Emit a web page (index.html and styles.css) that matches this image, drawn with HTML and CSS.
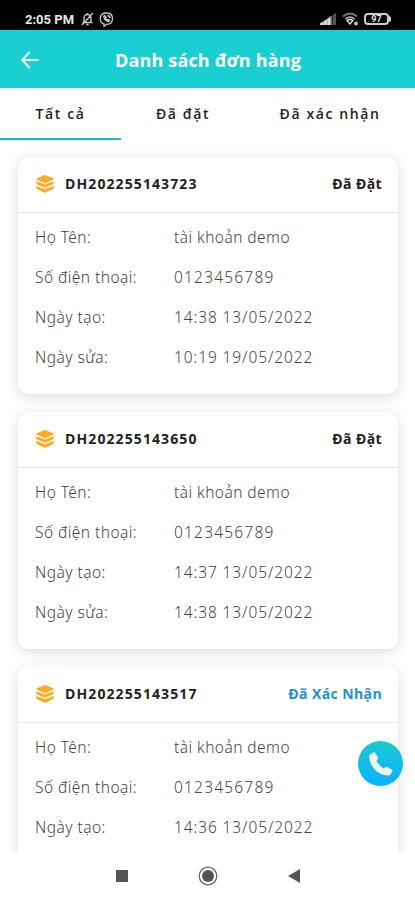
FILE: index.html
```html
<!DOCTYPE html>
<html lang="vi">
<head>
  <meta charset="UTF-8">
  <meta name="viewport" content="width=device-width, initial-scale=1.0">
  <title>Danh sách đơn hàng</title>
  <link rel="stylesheet" href="styles.css">
</head>
<body>
  <svg class="sprite">
    <symbol id="layers" viewBox="0 0 18 18">
      <path d="M9 0 L17.3 3.2 Q18 4 17.3 4.8 L9 8.200 L.7 4.800 Q0 4 .7 3.200Z"/>
      <path d="M.5 6.200 L9 9.500 L17.500 6.200 Q18.300 8 17.300 9.200 L9 12.800 L.7 9.200 Q-.3 8 .5 6.200Z"/>
      <path d="M.5 10.900 L9 14.200 L17.500 10.900 Q18.300 12.700 17.300 14 L9 18 L.7 14 Q-.3 12.700 .5 10.900Z"/>
    </symbol>
  </svg>

  <div class="app">
    <div class="status-bar">
      <span class="time">2:05 PM</span>
      <svg class="mute" width="13" height="14" viewBox="0 0 13 14" fill="none" stroke="#ccc" stroke-width="1.3">
        <path d="M1.5 10.5h10M3 10V6a3.5 3.5 0 0 1 7 0v4M6.5 1v1.5M5.3 12.5h2.4M1 13 12 1"/>
      </svg>
      <svg class="viber" width="15" height="15" viewBox="0 0 15 15" fill="none" stroke="#ccc" stroke-width="1.3">
        <path d="M7.5 1c4 0 6 1.500 6 5.700s-2 5.600-6 5.600L5 14.300V12C2.500 11.300 1.300 10 1.300 6.700 1.300 2.500 3.500 1 7.500 1z"/>
        <path d="M4.800 4c0 2.800 2 5 4.900 5.700l.8-1.200-1.400-1-.8.600C7.300 7.600 6.800 7 6.500 6.100l.6-.7-1-1.600zM8.500 3.500c1.600.2 2.400 1.200 2.500 2.700"/>
      </svg>
      <svg class="signal" width="17" height="12" viewBox="0 0 17 12">
        <path d="M0 12V10.500L11.500 3V12z" fill="#ddd"/>
        <path d="M12.500 12V2.300L16 0v12z" fill="#555"/>
        <path d="M3.500 12V8M7 12V6M10.500 12V3" stroke="#777" stroke-width=".6"/>
      </svg>
      <svg class="wifi" width="17" height="14" viewBox="0 0 17 14" fill="none">
        <path d="M1 4.500Q8 -1.500 15 4.500" stroke="#777" stroke-width="1.700"/>
        <path d="M3.300 7.200Q8 3.200 12.700 7.200" stroke="#aaa" stroke-width="1.600"/>
        <path d="M5 8.500Q8 6.500 11 8.500L8 12z" stroke="#eee" stroke-width="1.300"/>
        <circle cx="14" cy="11.500" r="2" fill="#bbb"/>
      </svg>
      <div class="battery">97</div>
    </div>

    <div class="header">
      <svg class="back" width="20" height="18" viewBox="0 0 20 18" fill="none" stroke="#e4fafa" stroke-width="2">
        <path d="M18.500 9H2.500M9.700 1 2.200 9l7.500 8"/>
      </svg>
      <h1>Danh sách đơn hàng</h1>
    </div>

    <div class="tabs">
      <div class="tab active">Tất cả</div>
      <div class="tab">Đã đặt</div>
      <div class="tab">Đã xác nhận</div>
    </div>

    <div class="orders">
      <div class="card">
        <div class="card-header">
          <svg class="icon"><use href="#layers"/></svg>
          <span class="code">DH202255143723</span>
          <span class="status">Đã Đặt</span>
        </div>
        <div class="card-body">
          <div class="row"><span class="label">Họ Tên:</span><span>tài khoản demo</span></div>
          <div class="row"><span class="label">Số điện thoại:</span><span class="phone">0123456789</span></div>
          <div class="row"><span class="label">Ngày tạo:</span><span class="date">14:38 13/05/2022</span></div>
          <div class="row"><span class="label">Ngày sửa:</span><span class="date">10:19 19/05/2022</span></div>
        </div>
      </div>

      <div class="card">
        <div class="card-header">
          <svg class="icon"><use href="#layers"/></svg>
          <span class="code">DH202255143650</span>
          <span class="status">Đã Đặt</span>
        </div>
        <div class="card-body">
          <div class="row"><span class="label">Họ Tên:</span><span>tài khoản demo</span></div>
          <div class="row"><span class="label">Số điện thoại:</span><span class="phone">0123456789</span></div>
          <div class="row"><span class="label">Ngày tạo:</span><span class="date">14:37 13/05/2022</span></div>
          <div class="row"><span class="label">Ngày sửa:</span><span class="date">14:38 13/05/2022</span></div>
        </div>
      </div>

      <div class="card">
        <div class="card-header">
          <svg class="icon"><use href="#layers"/></svg>
          <span class="code">DH202255143517</span>
          <span class="status confirmed">Đã Xác Nhận</span>
        </div>
        <div class="card-body">
          <div class="row"><span class="label">Họ Tên:</span><span>tài khoản demo</span></div>
          <div class="row"><span class="label">Số điện thoại:</span><span class="phone">0123456789</span></div>
          <div class="row"><span class="label">Ngày tạo:</span><span class="date">14:36 13/05/2022</span></div>
        </div>
      </div>
    </div>

    <div class="nav-bar">
      <svg width="12" height="12" viewBox="0 0 12 12"><path d="M0 0h12v12H0z" fill="#555"/></svg>
      <svg width="20" height="20" viewBox="0 0 20 20">
        <circle cx="10" cy="10" r="8.800" fill="none" stroke="#666" stroke-width="1.300"/>
        <circle cx="10" cy="10" r="6" fill="#555"/>
      </svg>
      <svg width="12" height="14" viewBox="0 0 12 14"><path d="M12 0v14L0 7z" fill="#555"/></svg>
    </div>

    <div class="call">
      <svg width="24" height="24" viewBox="0 0 24 24" fill="#f0f3f4">
        <path d="M1.500 2 4.200.5Q5.600 0 6.500 1.200L8.800 5.200Q9.400 6.600 8.400 7.600L7.400 9Q10.200 13.800 14.800 16.400L16.300 15.200Q17.300 14.400 18.600 15.100L22.600 17.400Q23.800 18.300 23.200 19.600L21.500 22.500Q20.800 23.600 19.300 23.600 10.500 23 5 16.800 .2 11 .2 4.300.3 2.800 1.500 2z"/>
      </svg>
    </div>
  </div>
</body>
</html>
```
FILE: styles.css
```css
* {
  box-sizing: border-box;
}
body {
  font-family: "Open Sans", "Noto Sans", sans-serif;
  margin: 0;
  background: #fff;
}
.sprite {
  display: none;
}
.app {
  position: relative;
  display: flex;
  flex-direction: column;
  width: 415px;
  height: 900px;
  overflow: hidden;
}
.status-bar {
  display: flex;
  align-items: center;
  height: 30px;
  padding: 8px 24px 0 25px;
  background: #000;
  color: #e8e8e8;
}
.time {
  width: 50px;
  font: bold 13px Roboto, sans-serif;
  white-space: nowrap;
}
.mute {
  margin-left: 6px;
}
.viber {
  margin-left: 5px;
}
.signal {
  margin-left: auto;
}
.wifi {
  margin-left: 5px;
}
.battery {
  position: relative;
  width: 25px;
  height: 12px;
  margin: 0 2px 0 5px;
  border: 2px solid #ccc;
  border-radius: 4px;
  font: bold 9px/8px Roboto, sans-serif;
  text-align: center;
}
.battery::after {
  content: "";
  position: absolute;
  right: -4px;
  top: 1px;
  width: 2px;
  height: 6px;
  border-radius: 0 2px 2px 0;
  background: #ccc;
}
.header {
  display: flex;
  align-items: center;
  height: 58px;
  padding: 2px 20px 0 20px;
  background: #19cfd1;
  color: #fff;
}
.header h1 {
  flex: 1;
  margin: 0 19px 0 0;
  font-size: 18px;
  font-weight: 700;
  letter-spacing: 0.150px;
  text-align: center;
  white-space: nowrap;
}
.tabs {
  display: grid;
  grid-template-columns: 121px 124px 1fr;
  height: 51px;
}
.tab {
  padding-top: 1px;
  font-size: 14px;
  font-weight: 600;
  line-height: 49px;
  letter-spacing: 1.600px;
  text-align: center;
  color: #222;
}
.tab.active {
  border-bottom: 2px solid #1fb9be;
}
.orders {
  flex: 1;
  min-height: 0;
  overflow: hidden;
  display: flex;
  flex-direction: column;
  gap: 18px;
  padding: 18px 17px 0 18px;
}
.card {
  flex: none;
  height: 237px;
  border-radius: 12px;
  background: #fff;
  box-shadow: 0 3px 14px rgba(0, 0, 0, 0.14);
}
.card-header {
  display: flex;
  align-items: center;
  height: 56px;
  padding: 0 16px 2px 18px;
  border-bottom: 1px solid #e6e6e6;
  font-size: 14px;
  font-weight: 700;
  color: #222;
}
.icon {
  width: 18px;
  height: 18px;
  margin-right: 11px;
  fill: #fbac24;
}
.code {
  font-size: 14px;
  letter-spacing: 1.100px;
}
.status {
  margin-left: auto;
  letter-spacing: 0.400px;
}
.confirmed {
  color: #2391cf;
}
.card-body {
  padding: 4px 16px 0 17px;
}
.row {
  display: flex;
  height: 40px;
  font-family: "Noto Sans", "Open Sans", sans-serif;
  font-size: 15.500px;
  font-weight: 300;
  line-height: 40px;
  letter-spacing: 0.450px;
  color: #444;
  white-space: nowrap;
}
.label {
  width: 139px;
}
.phone {
  letter-spacing: 1.200px;
}
.date {
  letter-spacing: 0.900px;
}
.nav-bar {
  display: flex;
  align-items: center;
  justify-content: center;
  gap: 70px;
  height: 49px;
  background: #fff;
}
.call {
  position: absolute;
  left: 358px;
  top: 741px;
  display: flex;
  align-items: center;
  justify-content: center;
  width: 45px;
  height: 45px;
  border-radius: 50%;
  background: linear-gradient(#1dc9cd, #08b1ff);
}
```
